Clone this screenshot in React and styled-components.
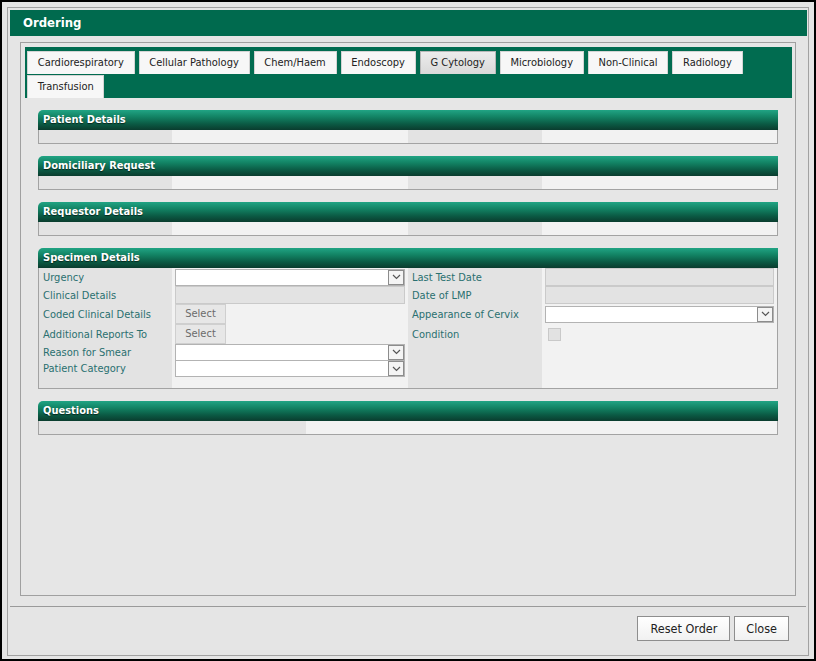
import * as React from 'react'
import styled, { createGlobalStyle } from 'styled-components'

const FONT = `'DejaVu Sans Condensed', 'DejaVu Sans', Tahoma, sans-serif`

const GlobalStyle = createGlobalStyle`
    html, body {
        margin: 0;
        padding: 0;
        background: #e4e4e4;
    }
    body {
        font-family: ${FONT};
        font-size: 11px;
    }
`

/* window chrome */
const Window = styled.div`
    box-sizing: border-box;
    width: 816px;
    height: 661px;
    border: 2px solid #000;
    background: #e5e5e5;
    padding: 5px 5px 3px 5px;
    display: flex;
`
const Frame = styled.div`
    flex: 1;
    display: flex;
    flex-direction: column;
    border: 1px solid #a2a2a2;
    padding: 2px 1px 0 2px;
`
const TitleBar = styled.div`
    height: 26px;
    background: #006a4e;
    color: #fff;
    font-weight: 700;
    font-size: 13px;
    line-height: 26px;
    padding-left: 13px;
`
const Body = styled.div`
    flex: 1;
    display: flex;
    padding: 6px 11px 10px 10px;
`
const Panel = styled.div`
    flex: 1;
    border: 1px solid #a0a0a0;
    padding: 4px 3px 4px 4px;
    background: #e6e6e6;
`

/* tabs */
const TabStrip = styled.div`
    background: #016c50;
    padding: 4px 2px 0 2px;
    display: flex;
    flex-wrap: wrap;
    column-gap: 4px;
    row-gap: 1px;
`
const Tab = styled.div`
    box-sizing: border-box;
    height: 23px;
    line-height: 21px;
    padding: 0 9.75px;
    background: ${p => p.$active ? 'linear-gradient(#ececec, #d9d9d9)' : '#f7f7f7'};
    border: 1px solid ${p => p.$active ? '#b8b8b8' : '#d4d4d4'};
    border-bottom: none;
    color: #222;
    white-space: nowrap;
`

/* sections */
const Sections = styled.div`
    padding: 12px 14px 0 13px;
    display: flex;
    flex-direction: column;
    gap: 12px;
`
const SectionHeader = styled.div`
    height: 20px;
    line-height: 19px;
    border-top-left-radius: 5px;
    background: linear-gradient(#21a484 0%, #128263 35%, #0b5a44 70%, #0a3c2e 100%);
    color: #fff;
    font-weight: 700;
    font-size: 11px;
    padding-left: 5px;
    text-shadow: 0 1px 1px rgba(0,0,0,0.6);
`
const SectionBody = styled.div`
    display: grid;
    grid-template-columns: ${p => p.$cols || '133px 236px 134px 1fr'};
    grid-template-rows: ${p => p.$rows || '13px'};
    border: 1px solid #a3a3a3;
    border-top: none;
`
const Cell = styled.div`
    background: ${p => p.$label ? '#e3e3e3' : '#f2f2f2'};
    display: flex;
    align-items: center;
    min-width: 0;
    padding-left: ${p => p.$label ? '4px' : '3px'};
    padding-right: ${p => p.$label ? '0' : '3px'};
`
const Label = styled.span`
    color: #2a7070;
    font-size: 11px;
    white-space: nowrap;
`

/* controls */
const SelectBox = styled.div`
    box-sizing: border-box;
    flex: 1;
    height: 17px;
    background: #fff;
    border: 1px solid #b3b3b3;
    display: flex;
    justify-content: flex-end;
`
const Arrow = styled.div`
    box-sizing: border-box;
    width: 16px;
    height: 15px;
    border: 1px solid #8c8c8c;
    background: #f4f4f4;
    display: flex;
    align-items: center;
    justify-content: center;
`
const TextBox = styled.div`
    box-sizing: border-box;
    flex: 1;
    height: ${p => p.$h || 18}px;
    background: #e3e3e3;
    border: 1px solid #cacaca;
`
const PickButton = styled.div`
    box-sizing: border-box;
    width: 51px;
    height: 20px;
    line-height: 18px;
    text-align: center;
    background: #e7e7e7;
    border: 1px solid #cfcfcf;
    color: #6b6b6b;
`
const Check = styled.div`
    box-sizing: border-box;
    width: 13px;
    height: 13px;
    margin-left: 3px;
    background: #e2e2e2;
    border: 1px solid #c9c9c9;
`

/* footer */
const Footer = styled.div`
    box-sizing: border-box;
    height: 49px;
    border-top: 1px solid #9a9a9a;
    margin-right: 1px;
    display: flex;
    justify-content: flex-end;
    align-items: flex-start;
    gap: 4px;
    padding: 9px 17px 0 0;
`
const Button = styled.div`
    box-sizing: border-box;
    height: 25px;
    line-height: 23px;
    padding: 0 ${p => p.$pad || 12}px;
    background: linear-gradient(#ffffff, #f1f1f1);
    border: 1px solid #8e8e8e;
    color: #222;
    font-size: 12.5px;
`

const Select = () => (
    <SelectBox>
        <Arrow>
            <svg width="9" height="6" viewBox="0 0 9 6">
                <path d="M1 1 L4.5 4.5 L8 1" fill="none" stroke="#555" strokeWidth="1.2" />
            </svg>
        </Arrow>
    </SelectBox>
)

const tabs = ['Cardiorespiratory', 'Cellular Pathology', 'Chem/Haem', 'Endoscopy', 'G Cytology', 'Microbiology', 'Non-Clinical', 'Radiology', 'Transfusion']

const EmptySection = ({ title, cols }) => (
    <div>
        <SectionHeader>{title}</SectionHeader>
        <SectionBody $cols={cols}>
            {cols
                ? <><Cell $label /><Cell /></>
                : <><Cell $label /><Cell /><Cell $label /><Cell /></>}
        </SectionBody>
    </div>
)

const SpecimenDetails = () => (
    <div>
        <SectionHeader>Specimen Details</SectionHeader>
        <SectionBody $rows="18px 18px 20px 20px 16px 17px 11px">
            <Cell $label><Label>Urgency</Label></Cell>
            <Cell><Select /></Cell>
            <Cell $label><Label>Last Test Date</Label></Cell>
            <Cell><TextBox /></Cell>

            <Cell $label><Label>Clinical Details</Label></Cell>
            <Cell><TextBox /></Cell>
            <Cell $label><Label>Date of LMP</Label></Cell>
            <Cell><TextBox /></Cell>

            <Cell $label><Label>Coded Clinical Details</Label></Cell>
            <Cell><PickButton>Select</PickButton></Cell>
            <Cell $label><Label>Appearance of Cervix</Label></Cell>
            <Cell><Select /></Cell>

            <Cell $label><Label>Additional Reports To</Label></Cell>
            <Cell><PickButton>Select</PickButton></Cell>
            <Cell $label><Label>Condition</Label></Cell>
            <Cell><Check /></Cell>

            <Cell $label><Label>Reason for Smear</Label></Cell>
            <Cell><Select /></Cell>
            <Cell $label />
            <Cell />

            <Cell $label><Label>Patient Category</Label></Cell>
            <Cell><Select /></Cell>
            <Cell $label />
            <Cell />

            <Cell $label /><Cell /><Cell $label /><Cell />
        </SectionBody>
    </div>
)

const App = () => {
    return (
        <>
            <GlobalStyle />
            <Window>
                <Frame>
                    <TitleBar>Ordering</TitleBar>
                    <Body>
                        <Panel>
                            <TabStrip>
                                {tabs.map(t => <Tab key={t} $active={t === 'G Cytology'}>{t}</Tab>)}
                            </TabStrip>
                            <Sections>
                                <EmptySection title="Patient Details" />
                                <EmptySection title="Domiciliary Request" />
                                <EmptySection title="Requestor Details" />
                                <SpecimenDetails />
                                <EmptySection title="Questions" cols="267px 1fr" />
                            </Sections>
                        </Panel>
                    </Body>
                    <Footer>
                        <Button>Reset Order</Button>
                        <Button $pad={11}>Close</Button>
                    </Footer>
                </Frame>
            </Window>
        </>
    )
}

export default App
